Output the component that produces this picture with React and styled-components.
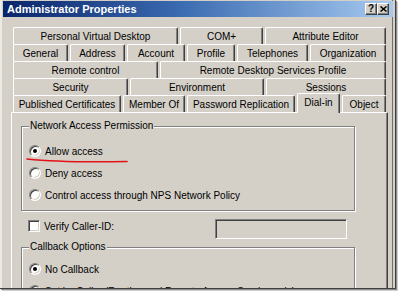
import React from 'react';
import styled, { createGlobalStyle } from 'styled-components';

const Global = createGlobalStyle`
  html, body { margin: 0; padding: 0; background: #fff; }
  body { font-family: "Liberation Sans", Arial, sans-serif; font-size: 10px; color: #000; }
`;

const Page = styled.div`
  width: 401px;
  height: 293px;
  overflow: hidden;
  background: #fff;
`;

const Window = styled.div`
  box-sizing: border-box;
  width: 396px;
  height: 289px;
  padding: 1px 2px 0 3px;
  background: #d4d0c8;
  border-right: 1px solid #404040;
  border-bottom: 1px solid #404040;
  box-shadow: inset 2px 0 0 #eceae4, inset -2px 0 0 #d4d0c8, inset -3px 0 0 #707070,
    1px 1px 0 #8c8c8c, 2px 2px 0 #cfcfcf;
  overflow: hidden;
`;

const TitleBar = styled.div`
  height: 16px;
  display: flex;
  align-items: center;
  padding: 0 4px;
  background: linear-gradient(to right, #0a246a 0%, #3a6ab0 45%, #a6caf0 100%);
`;

const Title = styled.span`
  flex: 1;
  color: #fff;
  font-weight: bold;
  font-size: 11px;
  white-space: nowrap;
`;

const CaptionButtons = styled.div`
  display: flex;
`;

const CaptionButton = styled.div`
  box-sizing: border-box;
  width: 12px;
  height: 12px;
  background: #d4d0c8;
  border: 1px solid;
  border-color: #fff #404040 #404040 #fff;
  box-shadow: inset -1px -1px 0 #808080;
  display: flex;
  align-items: center;
  justify-content: center;
  font-weight: bold;
  font-size: 10px;
  line-height: 10px;
`;

const Body = styled.div`
  padding: 10px 5px 0 8px;
`;

const TabRow = styled.div`
  display: flex;
  align-items: flex-end;
  gap: 2px;
  height: 17px;
  padding-left: 2px;
`;

const Tab = styled.div`
  box-sizing: border-box;
  flex: 0 0 ${(p) => p.$w}px;
  height: ${(p) => (p.$active ? '20px' : '17px')};
  margin-bottom: ${(p) => (p.$active ? '-1px' : '0')};
  padding-bottom: ${(p) => (p.$active ? '3px' : '0')};
  position: relative;
  z-index: ${(p) => (p.$active ? 2 : 0)};
  background: #d4d0c8;
  border-top: 1px solid #fff;
  border-left: 1px solid #fff;
  border-right: 1px solid #404040;
  border-radius: 2px 2px 0 0;
  box-shadow: inset -1px 0 0 #808080;
  display: flex;
  align-items: center;
  justify-content: center;
  white-space: nowrap;
`;

const Panel = styled.div`
  box-sizing: border-box;
  height: 200px;
  border-top: 1px solid #fff;
  border-left: 1px solid #fff;
  border-right: 1px solid #404040;
  box-shadow: inset -1px 0 0 #808080;
  padding: 7px 0 0 9px;
`;

const Group = styled.fieldset`
  box-sizing: border-box;
  width: 334px;
  height: ${(p) => p.$h}px;
  margin: ${(p) => p.$mt}px 0 0 0;
  padding: ${(p) => p.$pt}px 0 0 7px;
  border: 1px solid #808080;
  box-shadow: 1px 1px 0 #fff, inset 1px 1px 0 #fff;
  min-width: 0;
`;

const Legend = styled.legend`
  padding: 0 1px;
  line-height: 12px;
  font-size: 10px;
  background: #d4d0c8;
`;

const OptionRow = styled.div`
  position: relative;
  display: flex;
  align-items: center;
  gap: 4px;
  height: 22px;
  white-space: nowrap;
`;

const Radio = styled.span`
  box-sizing: border-box;
  flex: 0 0 12px;
  width: 12px;
  height: 12px;
  border-radius: 50%;
  background: #fff;
  border: 1px solid;
  border-color: #808080 #fff #fff #808080;
  box-shadow: inset 1px 1px 0 #404040, inset -1px -1px 0 #d4d0c8;
  display: flex;
  align-items: center;
  justify-content: center;
  &::after {
    content: '';
    width: 4px;
    height: 4px;
    border-radius: 50%;
    background: #000;
    display: ${(p) => (p.$on ? 'block' : 'none')};
  }
`;

const Mark = styled.svg`
  position: absolute;
  left: -3px;
  top: 17px;
  width: 102px;
  height: 7px;
  overflow: visible;
`;

const VerifyRow = styled.div`
  display: flex;
  align-items: flex-start;
  width: 326px;
  height: 20px;
  margin-top: 8px;
  padding-left: 7px;
  box-sizing: border-box;
`;

const CheckLabel = styled.div`
  display: flex;
  align-items: center;
  gap: 4px;
  margin-top: 1px;
  height: 12px;
  white-space: nowrap;
`;

const Check = styled.span`
  box-sizing: border-box;
  width: 12px;
  height: 12px;
  background: #fff;
  border: 1px solid;
  border-color: #808080 #fff #fff #808080;
  box-shadow: inset 1px 1px 0 #404040, inset -1px -1px 0 #d4d0c8;
`;

const TextBox = styled.div`
  box-sizing: border-box;
  margin-left: auto;
  width: 132px;
  height: 20px;
  background: #d4d0c8;
  border: 1px solid;
  border-color: #808080 #fff #fff #808080;
  box-shadow: inset 1px 1px 0 #404040, inset -1px -1px 0 #d4d0c8;
`;

const rows = [
  [
    { t: 'Personal Virtual Desktop', w: 165 },
    { t: 'COM+', w: 83 },
    { t: 'Attribute Editor', w: 121 },
  ],
  [
    { t: 'General', w: 55 },
    { t: 'Address', w: 55 },
    { t: 'Account', w: 58 },
    { t: 'Profile', w: 48 },
    { t: 'Telephones', w: 71 },
    { t: 'Organization', w: 76 },
  ],
  [
    { t: 'Remote control', w: 145 },
    { t: 'Remote Desktop Services Profile', w: 226 },
  ],
  [
    { t: 'Security', w: 115 },
    { t: 'Environment', w: 134 },
    { t: 'Sessions', w: 120 },
  ],
  [
    { t: 'Published Certificates', w: 108 },
    { t: 'Member Of', w: 62 },
    { t: 'Password Replication', w: 108 },
    { t: 'Dial-in', w: 43, active: true },
    { t: 'Object', w: 44 },
  ],
];

export default function App() {
  return (
    <Page>
      <Global />
      <Window>
        <TitleBar>
          <Title>Administrator Properties</Title>
          <CaptionButtons>
            <CaptionButton>?</CaptionButton>
            <CaptionButton>
              <svg width="7" height="6" viewBox="0 0 7 6">
                <path d="M0.5 0.5L6.5 5.5M6.5 0.5L0.5 5.5" stroke="#000" strokeWidth="1.5" />
              </svg>
            </CaptionButton>
          </CaptionButtons>
        </TitleBar>
        <Body>
          {rows.map((row, i) => (
            <TabRow key={i}>
              {row.map((tab) => (
                <Tab key={tab.t} $w={tab.w} $active={tab.active}>
                  {tab.t}
                </Tab>
              ))}
            </TabRow>
          ))}
          <Panel>
            <Group $h={91} $pt={8} $mt={0}>
              <Legend>Network Access Permission</Legend>
              <OptionRow>
                <Radio $on />
                Allow access
                <Mark viewBox="0 0 102 7">
                  <path
                    d="M1 2 C 20 4, 50 5.5, 101 4.5"
                    fill="none"
                    stroke="#e3121a"
                    strokeWidth="1.6"
                    strokeLinecap="round"
                  />
                </Mark>
              </OptionRow>
              <OptionRow>
                <Radio />
                Deny access
              </OptionRow>
              <OptionRow>
                <Radio />
                Control access through NPS Network Policy
              </OptionRow>
            </Group>
            <VerifyRow>
              <CheckLabel>
                <Check />
                Verify Caller-ID:
              </CheckLabel>
              <TextBox />
            </VerifyRow>
            <Group $h={100} $pt={5} $mt={2}>
              <Legend>Callback Options</Legend>
              <OptionRow>
                <Radio $on />
                No Callback
              </OptionRow>
              <OptionRow>
                <Radio />
                Set by Caller (Routing and Remote Access Service only)
              </OptionRow>
            </Group>
          </Panel>
        </Body>
      </Window>
    </Page>
  );
}
